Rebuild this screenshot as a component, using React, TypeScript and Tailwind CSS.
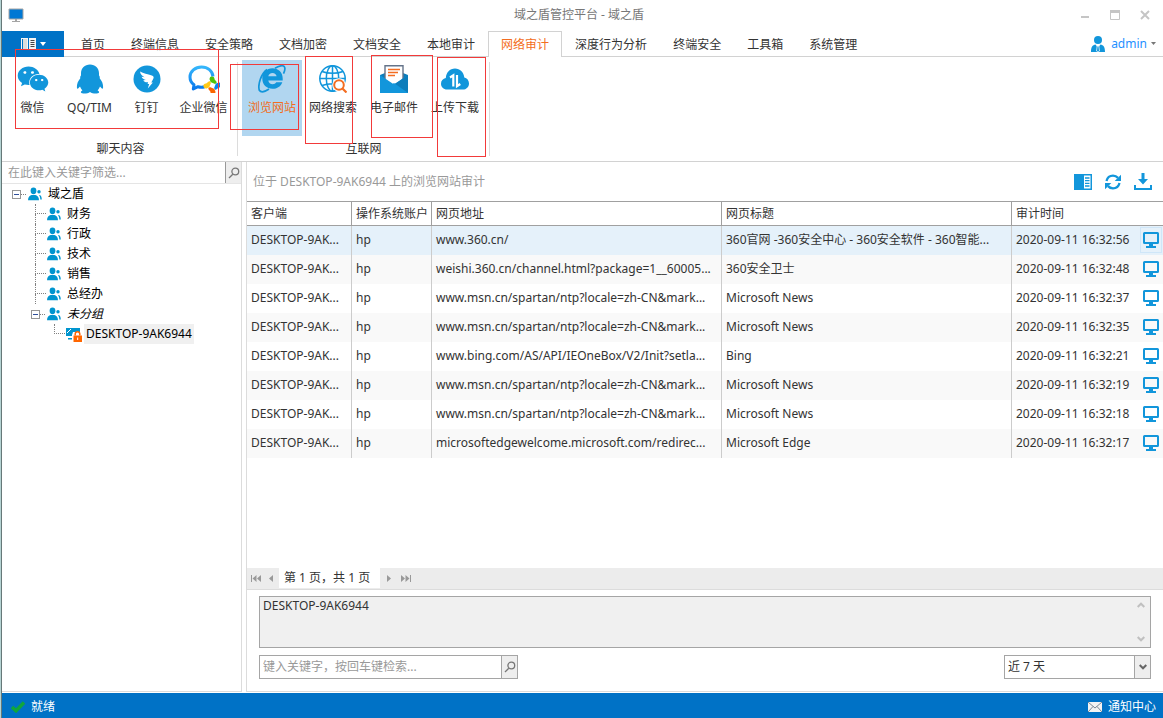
import React from "react";
import { FaWeixin } from "react-icons/fa";

const tabs = [
  "首页", "终端信息", "安全策略", "文档加密", "文档安全", "本地审计",
  "网络审计", "深度行为分析", "终端安全", "工具箱", "系统管理",
];

const rows = [
  ["DESKTOP-9AK...", "hp", "www.360.cn/", "360官网 -360安全中心 - 360安全软件 - 360智能...", "2020-09-11 16:32:56"],
  ["DESKTOP-9AK...", "hp", "weishi.360.cn/channel.html?package=1__60005...", "360安全卫士", "2020-09-11 16:32:48"],
  ["DESKTOP-9AK...", "hp", "www.msn.cn/spartan/ntp?locale=zh-CN&mark...", "Microsoft News", "2020-09-11 16:32:37"],
  ["DESKTOP-9AK...", "hp", "www.msn.cn/spartan/ntp?locale=zh-CN&mark...", "Microsoft News", "2020-09-11 16:32:35"],
  ["DESKTOP-9AK...", "hp", "www.bing.com/AS/API/IEOneBox/V2/Init?setla...", "Bing", "2020-09-11 16:32:21"],
  ["DESKTOP-9AK...", "hp", "www.msn.cn/spartan/ntp?locale=zh-CN&mark...", "Microsoft News", "2020-09-11 16:32:19"],
  ["DESKTOP-9AK...", "hp", "www.msn.cn/spartan/ntp?locale=zh-CN&mark...", "Microsoft News", "2020-09-11 16:32:18"],
  ["DESKTOP-9AK...", "hp", "microsoftedgewelcome.microsoft.com/redirec...", "Microsoft Edge", "2020-09-11 16:32:17"],
];

const QqIcon = () => (
  <svg viewBox="0 0 28 30" className="h-[30px] w-7" fill="#1296db">
    <path d="M14 .5C8.700.5 5 4.200 5 9.200v2.300c-.7.8-1 1.700-.7 2.700C2 17 .7 20 .9 23.200c.1 1.600.8 1.900 1.700.9l1.400-1.600c.5 1.500 1.300 2.800 2.400 3.900-1.300.5-1.700 1.300-1.400 2.100.5 1.300 6.400 1.500 9 -.5 2.600 2 8.500 1.800 9 .5.3-.8-.1-1.600-1.400-2.100 1.100-1.100 1.900-2.400 2.400-3.900l1.400 1.600c.9 1 1.600.7 1.700-.9.2-3.200-1.100-6.200-3.400-9 .3-1 0-1.900-.7-2.700V9.200C23 4.200 19.300.5 14 .5z" />
  </svg>
);

const DingIcon = () => (
  <svg viewBox="0 0 28 28" className="size-7">
    <circle cx="14" cy="14" r="13.500" fill="#1296db" />
    <path fill="#fff" d="M7 6.500c3.500 2.100 7.500 2.700 11.800 4 1.800.6 2.200 1.500 1.600 3.100-.6 1.500-1.400 2.700-2.100 4h1.600L14.800 23.500l1.400-4.500h-1.600l.5-1.700c-2.600.3-4-.6-4.800-2.100l2.600-.2c-2.100-.4-3.700-1.500-4.300-3.200l3 .5C9.400 11.200 7.300 9.500 7 6.500z" />
  </svg>
);

const petal = "M-2.400-5A2.500 2.500 0 1 1 2-6.300L4.400-3.200 2.700-1.500-1.500-3.200Q-2.400-3.800-2.400-5z";

const WeComIcon = () => (
  <svg viewBox="0 0 32 28" className="h-7 w-8">
    <defs>
      <linearGradient id="bubble" x1="0" y1="0" x2="0" y2="1">
        <stop offset="0" stopColor="#35b6fb" />
        <stop offset="1" stopColor="#0878ed" />
      </linearGradient>
    </defs>
    <path
      fill="none"
      stroke="url(#bubble)"
      strokeWidth="3"
      strokeLinejoin="round"
      d="M25 11.500C24.500 6 19.800 2 13.500 2S2 6.500 2 12c0 3.300 1.500 6 4 7.800L5.300 24l4.700-2.300c2.300.7 4.600.6 6.600 0"
    />
    <g transform="translate(24.500 20.500)">
      <path d={petal} fill="#4fc30a" />
      <path d={petal} fill="#0a86f0" transform="rotate(90)" />
      <path d={petal} fill="#fb6500" transform="rotate(180)" />
      <path d={petal} fill="#ffc818" transform="rotate(270)" />
    </g>
  </svg>
);

const ExplorerIcon = () => (
  <svg viewBox="0 0 28 28" className="size-7">
    <path
      fill="#1296db"
      fillRule="evenodd"
      d="M24.700 15.500H10.300c.3 2.400 2 3.700 4.300 3.700 1.800 0 2.900-.7 3.700-2h6c-1.400 4.200-5 6.600-9.800 6.600C8.500 23.800 4.300 19.500 4.300 13.500S8.600 3.300 14.500 3.300s10.200 4.200 10.200 10.200zM10.300 11.300h8.300c-.3-2-1.900-3.300-4.100-3.300s-3.900 1.300-4.200 3.300z"
    />
    <path
      fill="none"
      stroke="#1296db"
      strokeWidth="1.700"
      d="M9 4.500C3.500 8.500-.5 19 1.300 25.300c1.700 2.500 6 1.200 9.700-1.300M17 3.300c4-2.600 8-3.300 9.300-1.700 1.200 1.800.6 4.200-.8 7"
    />
  </svg>
);

const GlobeSearchIcon = () => (
  <svg viewBox="0 0 28 28" className="size-7" fill="none">
    <g stroke="#1296db" strokeWidth="1.500">
      <circle cx="13.500" cy="13.500" r="12.700" />
      <ellipse cx="13.500" cy="13.500" rx="6.200" ry="12.700" />
      <path d="M13.500.8v25.400M.8 13.500h25.400M3 6.500c6 2.400 15 2.400 21 0M3 20.500c6-2.400 15-2.400 21 0" />
    </g>
    <circle cx="20" cy="20" r="6.800" fill="#fff" />
    <circle cx="20" cy="20" r="4.800" fill="#fff" stroke="#f36d21" strokeWidth="2" />
    <path d="M23.500 23.500l4 4" stroke="#f36d21" strokeWidth="2.200" />
  </svg>
);

const MailIcon = () => (
  <svg viewBox="0 0 28 28" className="size-7">
    <path d="M0 10l5-2v14l-5 4zM28 10l-5-2v14l5 4z" fill="#0d7dbb" />
    <path d="M5 .7h18v19H5z" fill="#fff" stroke="#65748a" strokeWidth="1.400" />
    <path d="M8 4.500h12M8 7.500h10M8 10.500h7" stroke="#f36d21" strokeWidth="1.400" />
    <path d="M0 10l14 9.500L28 10v18H0z" fill="#1296db" />
    <path d="M14 19.500L28 10v18z" fill="#0d7dbb" />
    <path d="M0 28l14-10 14 10z" fill="#1296db" />
  </svg>
);

const CloudIcon = () => (
  <svg viewBox="0 0 28 24" className="h-6 w-7">
    <path fill="#1296db" d="M6 22.500c-3.500 0-6-2.600-6-5.800 0-3 2-5.200 4.800-5.700C5.200 5.500 8.800 1.500 14 1.500c5 0 8.700 3.700 9.300 8.900 2.800.6 4.700 3 4.700 6 0 3.500-2.600 6.100-6.200 6.100z" />
    <path d="M9 10.500l3.300-2.200v11.200M19.300 17l-3.300 2.200V8" fill="none" stroke="#fff" strokeWidth="2.200" />
  </svg>
);

const chatTools = [
  { label: "微信", icon: <FaWeixin className="size-8 text-[#1296db]" /> },
  { label: "QQ/TIM", icon: <QqIcon /> },
  { label: "钉钉", icon: <DingIcon /> },
  { label: "企业微信", icon: <WeComIcon /> },
];

const netTools = [
  { label: "浏览网站", icon: <ExplorerIcon />, active: true },
  { label: "网络搜索", icon: <GlobeSearchIcon /> },
  { label: "电子邮件", icon: <MailIcon /> },
  { label: "上传下载", icon: <CloudIcon /> },
];

const Magnifier = () => (
  <svg viewBox="0 0 12 12" className="size-3" fill="none" stroke="#777" strokeWidth="1.300">
    <circle cx="7.300" cy="4.500" r="3.400" />
    <path d="M4.800 7.200L1 11" />
  </svg>
);

const People = () => (
  <svg viewBox="0 0 14 14" className="h-[14px] w-[14px] shrink-0" fill="#0095cf">
    <circle cx="11" cy="4.800" r="1.700" />
    <path d="M11 8c1.800 0 2.700 1.300 2.800 4.500h-1.500c0-2-.5-3.400-1.300-4.500z" />
    <ellipse cx="5.500" cy="3.800" rx="2.900" ry="3.400" />
    <path d="M0 13.300c0-3.500 2-5 3.600-5.300h3.800c1.600.3 3.600 1.800 3.600 5.300z" />
  </svg>
);

const Expander = () => (
  <button aria-label="折叠" className="flex size-[9px] shrink-0 items-center justify-center border border-[#969696] bg-white">
    <span className="h-px w-[5px] bg-[#30509c]" />
  </button>
);

const Branch = ({ last = false }: { last?: boolean }) => (
  <span className="flex w-[11px] shrink-0 flex-col self-stretch">
    <span className="h-[10px] border-b border-l border-dotted border-[#808080]" />
    {!last && <span className="flex-1 border-l border-dotted border-[#808080]" />}
  </span>
);

const MonitorIcon = () => (
  <svg viewBox="0 0 16 16" className="size-4" fill="#1296db">
    <path fillRule="evenodd" d="M1.500 0h13Q16 0 16 1.500v9q0 1.500-1.500 1.500H10v2h3v2H3v-2h3v-2H1.500Q0 12 0 10.500v-9Q0 0 1.500 0zM2 2v8h12V2z" />
  </svg>
);

function Tool({ label, icon, active, width }: { label: string; icon: React.ReactNode; active?: boolean; width: string }) {
  return (
    <button className={`flex h-[76px] shrink-0 flex-col items-center ${width} ${active ? "bg-[#b1d6f0] text-[#f36d21]" : ""}`}>
      <span className="flex h-[38px] items-center justify-center">{icon}</span>
      <span className="whitespace-nowrap leading-[20px]">{label}</span>
    </button>
  );
}

export default function App() {
  return (
    <div className="flex min-h-screen border-l border-[#b5d3d3] bg-white font-['Noto_Sans','Noto_Sans_CJK_SC',sans-serif] text-xs text-[#333]">
      <div className="relative flex min-w-0 flex-1 flex-col border-l border-[#667878]">
        <header className="grid h-[30px] grid-cols-[1fr_auto_1fr] items-center pl-[6px] pr-[13px] text-[#777]">
          <svg viewBox="0 0 16 14" className="h-[14px] w-4">
            <path d="M1 1h14v10H1z" fill="#0078d4" stroke="#a5a5a5" />
            <path d="M7 11h2v2h3v1H4v-1h3z" fill="#a5a5a5" />
          </svg>
          <h1>域之盾管控平台 - 域之盾</h1>
          <div className="flex items-center justify-end gap-5">
            <button aria-label="最小化">
              <svg viewBox="0 0 10 10" className="size-[10px]"><path d="M1 7h8" stroke="#c5c5c5" strokeWidth="2" /></svg>
            </button>
            <button aria-label="最大化">
              <svg viewBox="0 0 10 10" className="size-[10px]"><path d="M.5.5h9v9h-9z" fill="none" stroke="#c5c5c5" /><path d="M0 0h10v3H0z" fill="#c5c5c5" /></svg>
            </button>
            <button aria-label="关闭">
              <svg viewBox="0 0 10 10" className="size-[10px]"><path d="M1 1l8 8M9 1l-8 8" stroke="#c5c5c5" strokeWidth="2" /></svg>
            </button>
          </div>
        </header>

        <nav className="mt-px flex h-[26px] items-stretch border-b border-[#d2d2d2]">
          <button aria-label="菜单" className="mr-1 flex h-[26px] w-[62px] shrink-0 items-center justify-center gap-1 bg-[#0072c6]">
            <svg viewBox="0 0 15 12" className="h-3 w-[15px]">
              <path d="M0 0h7v12H0zM8 0h7v12H8z" fill="#f5f5f5" />
              <path d="M1 1h5v10H1z" fill="#0072c6" />
              <path d="M2 1h4v10H2z" fill="#ddd" />
              <path d="M9.500 2.500h4M9.500 4.500h4M9.500 6.500h4M9.500 8.500h4" stroke="#444" />
            </svg>
            <svg viewBox="0 0 6 4" className="h-1 w-[6px]"><path d="M0 0h6L3 4z" fill="#fff" /></svg>
          </button>
          {tabs.map((t) => (
            <button
              key={t}
              className={
                t === "网络审计"
                  ? "z-1 h-[26px] shrink-0 border border-b-0 border-[#d2d2d2] bg-white px-3 pt-px text-[#f36d21]"
                  : "h-[26px] shrink-0 px-[13px] pt-[2px]"
              }
            >
              {t}
            </button>
          ))}
          <button className="ml-auto mr-[7px] flex items-center gap-[6px] text-[#1e90ff]">
            <svg viewBox="0 0 14 16" className="h-4 w-[14px]" fill="#1296db">
              <circle cx="7" cy="4" r="4" />
              <path d="M0 16c0-5 1.500-7 4.500-7.500L7 12l2.500-3.500C12.500 9 14 11 14 16z" />
              <path d="M6.200 10h1.600l.7 5L7 16l-1.500-1z" stroke="#fff" strokeWidth=".7" />
            </svg>
            admin
            <svg viewBox="0 0 5 3" className="-ml-[2px] h-[3px] w-[5px]"><path d="M0 0h5L2.500 3z" fill="#777" /></svg>
          </button>
        </nav>

        <section className="flex h-[105px] border-b border-[#d2d2d2]">
          <div className="my-[5px] flex w-[236px] shrink-0 flex-col border-r border-[#dcdcdc] pl-[2px]">
            <div className="-mt-[2px] flex h-[79px] shrink-0 items-start">
              {chatTools.map((t) => <Tool key={t.label} {...t} width="w-[57px]" />)}
            </div>
            <h2 className="text-center leading-[20px]">聊天内容</h2>
          </div>
          <div className="my-[5px] flex w-[252px] shrink-0 flex-col border-r border-[#dcdcdc] pl-1">
            <div className="-mt-[2px] flex h-[79px] shrink-0 items-start gap-px">
              {netTools.map((t) => <Tool key={t.label} {...t} width="w-[60px]" />)}
            </div>
            <h2 className="pr-1 text-center leading-[20px]">互联网</h2>
          </div>
        </section>

        <main className="flex flex-1 gap-1">
          <aside className="flex w-60 shrink-0 flex-col border-b border-r border-[#dcdcdc]">
            <form className="flex h-[22px] border-b border-[#e5e5e5]">
              <input
                aria-label="筛选"
                placeholder="在此键入关键字筛选..."
                className="min-w-0 flex-1 px-[6px] outline-none placeholder:text-[#999]"
              />
              <button type="button" aria-label="搜索" className="flex w-4 items-center justify-center border-l border-[#999] bg-[#eee]"><Magnifier /></button>
            </form>
            <ul className="leading-[20px] text-black">
              <li>
                <div className="flex h-5 items-center pl-[10px]">
                  <Expander />
                  <span className="mr-[2px] w-[5px] border-t border-dotted border-[#808080]" />
                  <People />
                  <span className="ml-[6px]">域之盾</span>
                </div>
                <ul>
                  {["财务", "行政", "技术", "销售", "总经办"].map((g) => (
                    <li key={g} className="flex h-5 items-center pl-[33px]">
                      <Branch />
                      <span className="ml-px"><People /></span>
                      <span className="ml-[6px]">{g}</span>
                    </li>
                  ))}
                  <li>
                    <div className="flex h-5 items-center pl-[29px]">
                      <Expander />
                      <span className="mr-[2px] w-[5px] border-t border-dotted border-[#808080]" />
                      <People />
                      <span className="ml-[6px] italic">未分组</span>
                    </div>
                    <ul>
                      <li className="flex h-5 items-center pl-[52px]">
                        <Branch last />
                        <svg viewBox="0 0 16 15" className="ml-px h-[15px] w-4">
                          <path d="M0 1h14v8H0zM2 11h7v1.500H2z" fill="#0095cf" />
                          <path d="M1 6l4-4" stroke="#fff" strokeWidth="1" />
                          <path d="M7 5h9v10H6V8z" fill="#fff" />
                          <path d="M9.200 8.500V7a2.300 2.300 0 0 1 4.600 0v1.500" fill="none" stroke="#f60" strokeWidth="1.500" />
                          <path d="M7.500 8.500H16V15H7.500z" fill="#f60" />
                          <path d="M11.700 10.500v2.500" stroke="#fff" />
                        </svg>
                        <span className="ml-[2px] bg-[#f0f0f0] px-[2px]">DESKTOP-9AK6944</span>
                      </li>
                    </ul>
                  </li>
                </ul>
              </li>
            </ul>
          </aside>

          <section className="flex min-w-0 flex-1 flex-col border-b border-l border-[#dcdcdc]">
            <div className="flex h-[39px] items-center pl-[6px] pr-[11px] text-[#999]">
              <h2 className="flex-1">位于 DESKTOP-9AK6944 上的浏览网站审计</h2>
              <div className="flex items-center gap-3">
                <button aria-label="面板">
                  <svg viewBox="0 0 18 16" className="h-4 w-[18px]"><path d="M0 0h18v16H0z" fill="#1296db" /><path d="M10 1.500h6.500v13H10z" fill="#fff" /><path d="M11 4h4.500M11 6.700h4.500M11 9.300h4.500M11 12h4.500" stroke="#1296db" strokeWidth="1.300" /></svg>
                </button>
                <button aria-label="刷新">
                  <svg viewBox="0 0 18 16" className="h-4 w-[18px]" fill="#1296db">
                    <path d="M2.500 7C3.500 3 6 1.700 9 1.700c2.200 0 3.700.8 5 2.200" fill="none" stroke="#1296db" strokeWidth="2.300" />
                    <path d="M15.500 9c-1 4-3.500 5.300-6.500 5.300-2.200 0-3.700-.8-5-2.200" fill="none" stroke="#1296db" strokeWidth="2.300" />
                    <path d="M17 .7V7h-6.300zM1 15.300V9h6.300z" />
                  </svg>
                </button>
                <button aria-label="下载">
                  <svg viewBox="0 0 18 17" className="h-[17px] w-[18px]" fill="#1296db"><path d="M7.500 0h3v6H14l-5 5.500L4 6h3.500z" /><path d="M0 12h2v3h14v-3h2v5H0z" /></svg>
                </button>
              </div>
            </div>

            <table className="w-full table-fixed border-separate border-spacing-0 text-left">
              <colgroup>
                <col className="w-[105px]" />
                <col className="w-20" />
                <col className="w-[290px]" />
                <col />
                <col className="w-[151px]" />
              </colgroup>
              <thead>
                <tr className="h-[25px]">
                  {["客户端", "操作系统账户", "网页地址", "网页标题", "审计时间"].map((h) => (
                    <th key={h} className="whitespace-nowrap border-y border-r border-[#a0a0a0] px-1 py-0 font-normal last:border-r-0">{h}</th>
                  ))}
                </tr>
              </thead>
              <tbody>
                {rows.map((r, i) => (
                  <tr key={i} className={`h-[29px] ${i === 0 ? "bg-[#e5f1fa]" : i % 2 ? "bg-[#f9f9f9]" : ""}`}>
                    {r.slice(0, 4).map((c, j) => (
                      <td key={j} className="overflow-hidden whitespace-nowrap border-r border-[#ccc] px-1 pb-[2px] pt-0">{c}</td>
                    ))}
                    <td className="pb-[2px] pl-1 pr-px pt-0">
                      <div className="flex items-center justify-between whitespace-nowrap">
                        {r[4]}
                        <button aria-label="查看屏幕" className={`flex h-[26px] w-[22px] items-center justify-center border ${i === 0 ? "border-[#cfe6f8]" : "border-transparent"}`}>
                          <MonitorIcon />
                        </button>
                      </div>
                    </td>
                  </tr>
                ))}
              </tbody>
            </table>

            <div className="mt-auto flex h-[22px] items-stretch border-b border-[#dcdcdc] bg-[#ececec] pb-px">
              <div className="flex w-8 items-center justify-between pl-1 pr-[6px]">
                <button aria-label="首页">
                  <svg viewBox="0 0 10 7" className="h-[7px] w-[10px]" fill="#999"><path d="M0 0h1v7H0zM5.500 0v7L1.500 3.500zM10 0v7L6 3.500z" /></svg>
                </button>
                <button aria-label="上一页">
                  <svg viewBox="0 0 4 7" className="h-[7px] w-1" fill="#999"><path d="M4 0v7L0 3.500z" /></svg>
                </button>
              </div>
              <span className="flex w-[101px] items-center bg-white pl-[5px]">第 1 页，共 1 页</span>
              <div className="flex items-center gap-[10px] pl-[7px]">
                <button aria-label="下一页">
                  <svg viewBox="0 0 4 7" className="h-[7px] w-1" fill="#999"><path d="M0 0v7l4-3.500z" /></svg>
                </button>
                <button aria-label="末页">
                  <svg viewBox="0 0 10 7" className="h-[7px] w-[10px]" fill="#999"><path d="M9 0h1v7H9zM4.500 0v7l4-3.500zM0 0v7l4-3.500z" /></svg>
                </button>
              </div>
            </div>

            <div className="flex flex-col gap-[7px] px-3 pb-3 pt-[6px]">
              <div className="flex h-[52px] border border-[#a5a5a5] bg-[#f0f0f0]">
                <textarea
                  aria-label="详细内容"
                  readOnly
                  defaultValue="DESKTOP-9AK6944"
                  className="min-w-0 flex-1 resize-none overflow-hidden px-[3px] leading-[18px] outline-none"
                />
                <div className="flex w-[18px] flex-col items-center justify-between py-[5px]">
                  <svg viewBox="0 0 8 6" className="h-[6px] w-2" fill="none" stroke="#c0c0c0" strokeWidth="2"><path d="M.7 5L4 1.700 7.300 5" /></svg>
                  <svg viewBox="0 0 8 6" className="h-[6px] w-2" fill="none" stroke="#c0c0c0" strokeWidth="2"><path d="M.7 1L4 4.300 7.300 1" /></svg>
                </div>
              </div>
              <div className="flex h-6 justify-between">
                <form className="flex w-[259px] border border-[#a5a5a5]">
                  <input
                    aria-label="检索"
                    placeholder="键入关键字，按回车键检索..."
                    className="min-w-0 flex-1 px-[3px] outline-none placeholder:text-[#999]"
                  />
                  <button type="button" aria-label="检索" className="flex w-4 items-center justify-center border-l border-[#a5a5a5] bg-[#eee]"><Magnifier /></button>
                </form>
                <div className="grid w-[147px] border border-[#a5a5a5]">
                  <select aria-label="时间范围" className="col-start-1 row-start-1 appearance-none bg-white px-[3px] outline-none">
                    <option>近 7 天</option>
                  </select>
                  <span className="pointer-events-none col-start-1 row-start-1 flex w-4 items-center justify-center justify-self-end border-l border-[#a5a5a5] bg-[#eee]">
                    <svg viewBox="0 0 8 6" className="h-[6px] w-2" fill="none" stroke="#666" strokeWidth="2"><path d="M.7 1L4 4.300 7.300 1" /></svg>
                  </span>
                </div>
              </div>
            </div>
          </section>
        </main>

        <footer className="mt-px flex h-[25px] items-center justify-between bg-[#0072c6] pl-[9px] pr-[7px] pt-[2px] text-white">
          <span className="flex items-center gap-[6px]">
            <svg viewBox="0 0 14 12" className="h-3 w-[14px]" fill="none" stroke="#10a63c" strokeWidth="3.500"><path d="M1 6l4 3.800L13 1.500" /></svg>
            就绪
          </span>
          <button className="flex items-center gap-[6px]">
            <svg viewBox="0 0 14 10" className="h-[10px] w-[14px]"><path d="M0 0h14v10H0z" fill="#f3f3f3" /><path d="M0 0l7 6 7-6M0 10l5-5.500M14 10L9 4.500" fill="none" stroke="#5c6c7c" strokeWidth=".8" /></svg>
            通知中心
          </button>
        </footer>

        <div aria-hidden="true" className="pointer-events-none">
          <span className="absolute left-[13px] top-[49px] z-10 h-20 w-[204px] border border-[#f23a3a]" />
          <span className="absolute left-[228px] top-16 z-10 h-[66px] w-[69px] border border-[#f23a3a]" />
          <span className="absolute left-[303px] top-14 z-10 h-[88px] w-12 border border-[#f23a3a]" />
          <span className="absolute left-[369px] top-[55px] z-10 h-[83px] w-[62px] border border-[#f23a3a]" />
          <span className="absolute left-[435px] top-[57px] z-10 h-[100px] w-[49px] border border-[#f23a3a]" />
        </div>
      </div>
    </div>
  );
}
